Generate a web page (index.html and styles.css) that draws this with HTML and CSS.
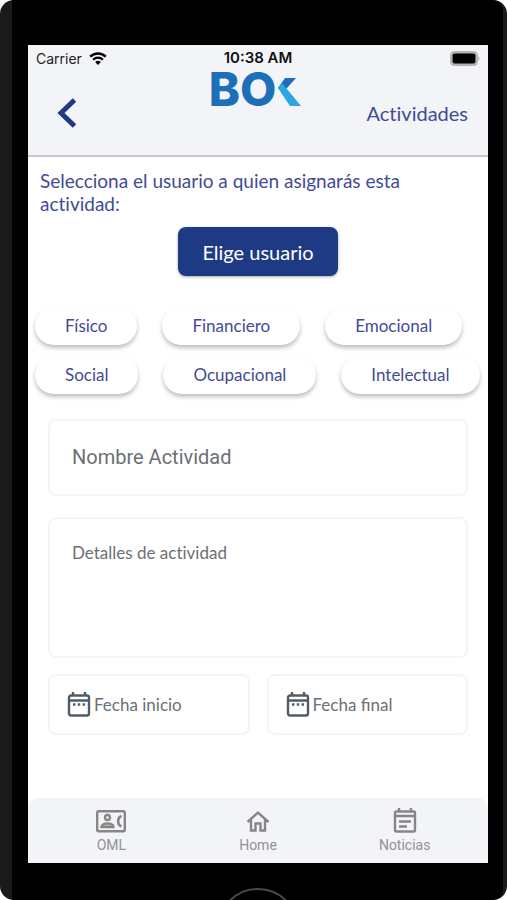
FILE: index.html
```html
<!DOCTYPE html>
<html lang="es">
<head>
    <meta charset="UTF-8">
    <meta name="viewport" content="width=device-width, initial-scale=1.0">
    <title>Actividades</title>
    <link rel="stylesheet" href="styles.css">
</head>
<body>
    <div class="phone">
        <div class="bezel">
            <div class="screen">
                <header class="header">
                    <div class="status-bar">
                        <div class="carrier">
                            <span>Carrier</span>
                            <svg class="wifi" viewBox="0 0 18 13" aria-hidden="true">
                                <path d="M1.2 4.6a11.2 11.2 0 0 1 15.6 0" fill="none" stroke="#000" stroke-width="2.4"/>
                                <path d="M4.1 7.7a7 7 0 0 1 9.8 0" fill="none" stroke="#000" stroke-width="2.2"/>
                                <path d="M9 13 6.2 10.1a4 4 0 0 1 5.6 0z"/>
                            </svg>
                        </div>
                        <span class="time">10:38 AM</span>
                        <svg class="battery" viewBox="0 0 30 15" aria-hidden="true">
                            <rect x="0.8" y="0.8" width="26.4" height="13.4" rx="3.6" fill="#b4b4b6" stroke="#b4b4b6" stroke-width="1.6"/>
                            <rect x="2.6" y="2.6" width="22.8" height="9.8" rx="2"/>
                            <path d="M28.3 5.2c1.8.8 1.8 3.8 0 4.6z" fill="#b4b4b6"/>
                        </svg>
                    </div>
                    <div class="nav">
                        <button class="back" type="button" aria-label="Volver">
                            <svg viewBox="0 0 20 30" aria-hidden="true">
                                <path d="M17.5 2 4 15l13.5 13" fill="none" stroke="#1f3a84" stroke-width="5"/>
                            </svg>
                        </button>
                        <div class="logo">
                            <span>BO</span>
                            <svg viewBox="0 0 23 28" aria-hidden="true">
                                <path d="M7 0h11L9 10l-4.5 4L0 10z" fill="#1d70b8"/>
                                <path d="M0 10 4 5l19 23H12z" fill="#2ba6e1"/>
                            </svg>
                        </div>
                        <h1 class="title">Actividades</h1>
                    </div>
                </header>

                <main class="content">
                    <p class="prompt">Selecciona el usuario a quien asignarás esta actividad:</p>
                    <button class="choose-user" type="button">Elige usuario</button>

                    <div class="chips">
                        <div class="chip-row">
                            <button class="chip" type="button">Físico</button>
                            <button class="chip" type="button">Financiero</button>
                            <button class="chip" type="button">Emocional</button>
                        </div>
                        <div class="chip-row">
                            <button class="chip" type="button">Social</button>
                            <button class="chip" type="button">Ocupacional</button>
                            <button class="chip" type="button">Intelectual</button>
                        </div>
                    </div>

                    <form class="form">
                        <input class="field name" type="text" placeholder="Nombre Actividad" aria-label="Nombre Actividad">
                        <textarea class="field details" placeholder="Detalles de actividad" aria-label="Detalles de actividad"></textarea>
                        <div class="dates">
                            <label class="field date">
                                <svg viewBox="0 0 24 26" aria-hidden="true">
                                    <rect x="2" y="3.5" width="20" height="20" rx="2"/>
                                    <path d="M2 8.5h20M6 4V0M18 4V0"/>
                                    <path d="M6 12.5h2.4M10.8 12.5h2.4M15.6 12.5h2.4"/>
                                </svg>
                                <input type="text" placeholder="Fecha inicio" aria-label="Fecha inicio">
                            </label>
                            <label class="field date">
                                <svg viewBox="0 0 24 26" aria-hidden="true">
                                    <rect x="2" y="3.5" width="20" height="20" rx="2"/>
                                    <path d="M2 8.5h20M6 4V0M18 4V0"/>
                                    <path d="M6 12.5h2.4M10.8 12.5h2.4M15.6 12.5h2.4"/>
                                </svg>
                                <input type="text" placeholder="Fecha final" aria-label="Fecha final">
                            </label>
                        </div>
                    </form>
                </main>

                <nav class="tabs">
                    <a class="tab" href="#oml">
                        <svg viewBox="0 0 30 26" aria-hidden="true">
                            <rect x="1.2" y="3.2" width="27.6" height="20" rx="1.5"/>
                            <circle cx="11.5" cy="9.5" r="2.5"/>
                            <path d="M5.5 19c0-4.8 12-4.8 12 0z" fill="#b5b5b6"/>
                            <path d="M25.5 8c-4.5 1.5-4.5 9 0 10.5" stroke-width="2.5"/>
                        </svg>
                        <span>OML</span>
                    </a>
                    <a class="tab" href="#home">
                        <svg viewBox="0 0 30 26" aria-hidden="true">
                            <path d="M4.5 14 15 4.5 25.5 14M8 12v10.5h4.5v-7h5v7H22V12"/>
                        </svg>
                        <span>Home</span>
                    </a>
                    <a class="tab" href="#noticias">
                        <svg viewBox="0 0 30 26" aria-hidden="true">
                            <rect x="5" y="3.5" width="20" height="20" rx="1.5"/>
                            <path d="M5 8h20M9 4V0M21 4V0M9 13.5h12M9 18.5h8"/>
                        </svg>
                        <span>Noticias</span>
                    </a>
                </nav>
            </div>
            <div class="chin">
                <div class="home-button"></div>
            </div>
        </div>
    </div>
</body>
</html>
```

FILE: styles.css
```css
* {
    box-sizing: border-box;
}
body {
    margin: 0;
    background: #fff;
    font-family: Lato, sans-serif;
    color: #3f4c93;
}
button {
    border: 0;
    font-family: inherit;
    cursor: pointer;
}
.phone {
    height: 100vh;
    padding: 0 4px 0 12px;
    background: #1a1a1a;
    border-radius: 14px;
    overflow: hidden;
}
.bezel {
    display: flex;
    flex-direction: column;
    height: 100%;
    padding: 45px 15px 0 16px;
    background: #000;
    border-radius: 0 10px 10px 0;
}
.screen {
    flex: 1;
    display: flex;
    flex-direction: column;
    background: #fff;
}

/* header */
.header {
    height: 112px;
    background: #f2f4f8;
    border-bottom: 2px solid #c4c6c9;
}
.status-bar {
    display: grid;
    grid-template-columns: 1fr auto 1fr;
    align-items: center;
    height: 26px;
    padding: 0 8px;
    font-family: Inter, sans-serif;
    font-size: 14px;
    color: #222;
}
.carrier {
    display: flex;
    align-items: center;
    gap: 7px;
}
.wifi {
    width: 18px;
    height: 13px;
}
.time {
    font-size: 15px;
    font-weight: 600;
    line-height: 18px;
    color: #111;
}
.battery {
    width: 30px;
    height: 15px;
    justify-self: end;
}
.nav {
    display: grid;
    grid-template-columns: minmax(0, 1fr) auto minmax(0, 1fr);
    align-items: start;
    padding: 0 20px;
}
.back {
    width: 20px;
    height: 30px;
    margin: 27px 0 0 9px;
    padding: 0;
    background: none;
}
.back svg {
    display: block;
}
.logo {
    display: flex;
    align-items: center;
    gap: 2px;
    height: 36px;
    margin-right: 6px;
    font-family: Inter, sans-serif;
    font-size: 47px;
    font-weight: 800;
    line-height: 36px;
    color: #1d70b8;
}
.logo svg {
    width: 23px;
    height: 28px;
    margin-top: 6px;
}
.title {
    margin: 30px 0 0;
    font-size: 20px;
    font-weight: 400;
    line-height: 24px;
    text-align: right;
    font-variant-ligatures: none;
}

/* content */
.content {
    flex: 1;
    padding: 12px 7px 0;
}
.prompt {
    margin: 0 5px;
    font-size: 19px;
    line-height: 23px;
    font-variant-ligatures: none;
}
.choose-user {
    display: block;
    margin: 12px auto 0;
    padding: 0 24px;
    height: 49px;
    font-size: 20px;
    color: #fff;
    background: #1f3a84;
    border-radius: 8px;
    box-shadow: 0 1px 3px rgba(0, 0, 0, 0.35);
}
.chips {
    display: flex;
    flex-direction: column;
    gap: 11px;
    margin-top: 31px;
}
.chip-row {
    display: flex;
    gap: 25px;
}
.chip {
    height: 38px;
    padding: 0 30px 1px;
    font-size: 17px;
    color: #3f4c93;
    background: #fff;
    border-radius: 19px;
    box-shadow: 0 3px 4px rgba(0, 0, 0, 0.25);
}

/* form */
.form {
    display: flex;
    flex-direction: column;
    margin: 25px 13px 0;
}
.field {
    width: 100%;
    color: #6b7075;
    background: #fff;
    border: 2px solid #f4f5f6;
    border-radius: 8px;
}
.field::placeholder,
.date input::placeholder {
    color: #6b7075;
    opacity: 1;
}
.name {
    height: 77px;
    padding: 0 22px 2px;
    font-family: Roboto, sans-serif;
    font-size: 20px;
}
.details {
    height: 141px;
    margin-top: 21px;
    padding: 23px 22px;
    font-family: inherit;
    font-size: 17px;
    line-height: 22px;
    font-variant-ligatures: none;
    resize: none;
}
.dates {
    display: grid;
    grid-template-columns: 1fr 1fr;
    gap: 17px;
    margin-top: 16px;
}
.date {
    display: flex;
    align-items: center;
    gap: 3px;
    height: 61px;
    padding: 0 17px;
}
.date svg {
    flex: none;
    width: 24px;
    height: 26px;
    fill: none;
    stroke: #505d66;
    stroke-width: 2.4;
}
.date input {
    width: 100%;
    min-width: 0;
    padding: 0;
    border: 0;
    font-family: inherit;
    font-size: 17px;
}

/* bottom tabs */
.tabs {
    display: grid;
    grid-template-columns: repeat(3, 1fr);
    height: 65px;
    padding: 10px 10px 0;
    background: #f2f4f8;
    border-radius: 10px 10px 0 0;
}
.tab {
    display: flex;
    flex-direction: column;
    align-items: center;
    gap: 2px;
    font-family: Roboto, sans-serif;
    font-size: 14px;
    line-height: 18px;
    color: #929292;
    text-decoration: none;
}
.tab svg {
    width: 30px;
    height: 26px;
    fill: none;
    stroke: #868686;
    stroke-width: 2.4;
}
.chin {
    display: flex;
    justify-content: center;
    height: 37px;
    padding-top: 25px;
    overflow: hidden;
}
.home-button {
    flex: none;
    width: 82px;
    height: 82px;
    border: 2px solid #4a4a4a;
    border-radius: 50%;
}
```
